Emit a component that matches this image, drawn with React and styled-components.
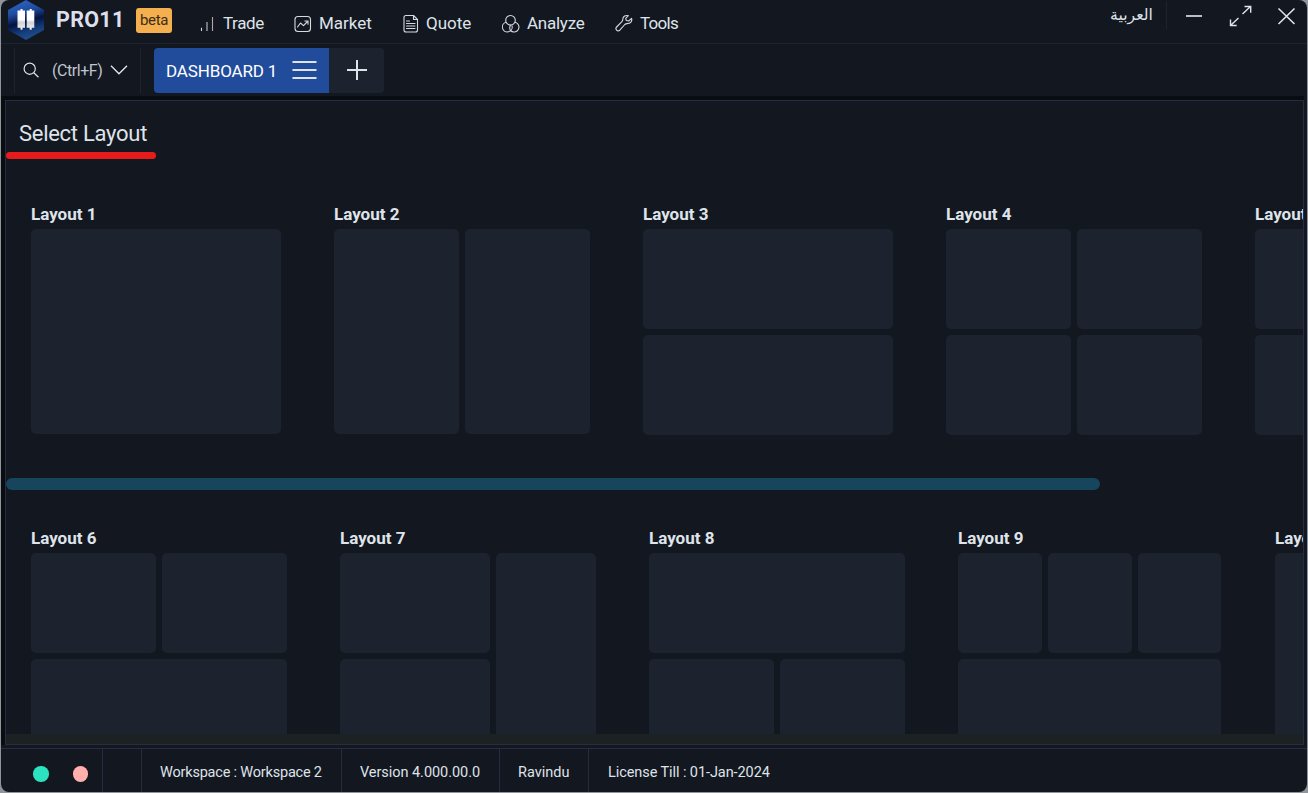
import React from "react";
import styled, { createGlobalStyle } from "styled-components";

const Global = createGlobalStyle`
  * { box-sizing: border-box; }
  html, body { margin: 0; padding: 0; }
  body {
    width: 1308px; height: 793px; overflow: hidden; background: #8f959b;
    font-family: Roboto, "Noto Sans", "DejaVu Sans", sans-serif; color: #dfe3ea;
  }
`;

const Window = styled.div`
  width: 1306px; height: 792px; margin-left: 1px; border-radius: 8px; overflow: hidden;
  background: #13171f; display: flex; flex-direction: column;
`;
const TopBar = styled.header`
  height: 44px; flex: none; display: flex; border-bottom: 1px solid #1d2230;
`;
const Logo = styled.svg`
  width: 36px; height: 40px; margin-left: 7px; flex: none;
`;
const Text = styled.span`
  display: block; white-space: nowrap; flex: none;
  font-size: ${(p) => p.$size || 17}px;
  font-weight: ${(p) => p.$weight || 400};
  letter-spacing: ${(p) => p.$track || 0}px;
  line-height: ${(p) => p.$line || 24}px;
`;
const Brand = styled(Text)`
  width: 92px; padding-left: 12px; padding-top: 8px; color: #dddfec;
`;
const Beta = styled.div`
  width: 36px; height: 25px; margin-top: 8px; border-radius: 3px; background: #f4b04f;
  color: #3b2c18; display: flex; justify-content: center; flex: none;
`;
const Menu = styled.nav`
  display: flex; margin-left: 28px; height: 43px;
`;
const MenuItem = styled.div`
  display: flex; width: ${(p) => p.$width}px; padding-top: 11px;
`;
const MenuIcon = styled.svg`
  width: ${(p) => p.$width}px; height: 24px; flex: none; fill: none;
  stroke: #d6dae2; stroke-width: 1.1; stroke-linecap: round; stroke-linejoin: round;
`;
const Controls = styled.div`
  display: flex; margin-left: auto; height: 43px;
`;
const Language = styled.div`
  width: 57px; height: 28px; margin-top: 1px; border-right: 1px solid #1e2330;
  direction: ltr; font: 15.7px/28px "DejaVu Sans", sans-serif; white-space: nowrap;
`;
const ControlIcons = styled.svg`
  width: 140px; height: 32px; fill: none; stroke: #dfe3ea; stroke-width: 1.4;
`;
const TabBar = styled.div`
  height: 52px; flex: none; display: flex; padding: 4px 0 3px 13px;
`;
const Search = styled.div`
  width: 127px; height: 45px; border: solid #1e2330; border-width: 0 1px;
  display: flex; align-items: center; padding-left: 8px; color: #bfc5cf;
`;
const LineIcon = styled.svg`
  width: ${(p) => p.$width}px; height: ${(p) => p.$height}px; flex: none; fill: none;
  margin-bottom: ${(p) => p.$lift || 0}px;
  stroke: #dfe3ea; stroke-width: ${(p) => p.$stroke || 1.4};
`;
const SearchText = styled(Text)`
  width: 58px; margin-left: 13px;
`;
const Tab = styled.div`
  width: 175px; height: 45px; margin-left: 13px; border-radius: 4px 0 0 4px;
  background: #214c9c; color: #fff; display: flex; align-items: center; padding-left: 12px;
`;
const TabText = styled(Text)`
  width: 126px;
`;
const AddTab = styled.div`
  width: 55px; height: 45px; border-radius: 0 4px 4px 0; background: #1d222f;
  display: flex; align-items: center; justify-content: center;
`;
const Workspace = styled.main`
  height: 649px; flex: none; padding: 4px 0 0 4px; width: 1303px; background: #090c11;
`;
const Panel = styled.section`
  width: 1299px; height: 645px; border: 1px solid #262c42; background: #13171f; overflow: hidden;
  display: flex; flex-direction: column;
`;
const Title = styled(Text)`
  height: 51px; padding: 18px 0 0 13px; flex: none;
`;
const Underline = styled.div`
  width: 150px; height: 7px; border-radius: 4px; background: #e61c1c; flex: none;
`;
const Row = styled.div`
  display: flex; gap: 53px; padding-left: 25px; flex: none;
  margin-top: ${(p) => p.$top}px; height: ${(p) => p.$height}px; overflow: hidden;
`;
const Layout = styled.div`
  width: ${(p) => p.$width}px; flex: none;
`;
const LayoutName = styled(Text)`
  height: 27px;
`;
const Tiles = styled.div`
  display: grid; gap: 6px; grid-template-columns: ${(p) => p.$cols};
  grid-template-rows: ${(p) => p.$rows || "100px 100px"};
`;
const Tile = styled.div`
  background: #1d222f; border-radius: 5px;
  grid-column: span ${(p) => p.$c || 1}; grid-row: span ${(p) => p.$r || 1};
`;
const ScrollThumb = styled.div`
  width: 1094px; height: 12px; margin-top: 43px; border-radius: 6px; background: #17455d; flex: none;
`;
const ScrollTrack = styled.div`
  height: 10px; background: #1c2123; flex: none;
`;
const StatusBar = styled.footer`
  display: flex; height: 44px; margin-top: 3px; border-top: 1px solid #292d43; flex: none;
`;
const Cell = styled.div`
  width: ${(p) => p.$width}px; padding: ${(p) => p.$pad || "12px 0 0 18px"};
  border-right: ${(p) => (p.$last ? 0 : 1)}px solid #252a3d; display: flex; gap: 24px;
`;
const Dot = styled.i`
  width: 15.5px; height: 15.5px; border-radius: 50%; background: ${(p) => p.$color};
`;

const menu = [
  { name: "Trade", width: 94, icon: 23, track: -0.4, art: (
    <g strokeLinecap="butt"><path d="M1.5 20v-3.2" stroke="#d6dae2" /><path d="M7 20v-9" stroke="#b9c6d2" /><path d="M12.5 20V6" stroke="#b7a5af" /></g>) },
  { name: "Market", width: 108, icon: 25, track: 0, art: (
    <><rect x="1" y="5.5" width="15.5" height="15" rx="3" /><path d="M3.5 16l3-4 3 2.7L14 10m-3.2 0H14v3.2" /></>) },
  { name: "Quote", width: 100, icon: 24, track: 0, art: (
    <><path d="M4 4.5h7.5l4 4V19q0 2-2 2H4q-2 0-2-2V6.5q0-2 2-2zM11.5 4.5v4h4M4.5 10h3M4.5 12.5h8.5M4.5 15h8.5M4.5 17.5h8.5" /></>) },
  { name: "Analyze", width: 113, icon: 25, track: -0.25, art: (
    <><circle cx="8.5" cy="9.3" r="4.8" /><path d="M4 11.3A4.9 4.9 0 1 0 10.1 15.1M13 11.3A4.9 4.9 0 1 1 8.5 19.5M8.5 19.5q-1.6-2.7 0-5.3" /></>) },
  { name: "Tools", width: 70, icon: 25, track: -0.7, art: (
    <path d="M16.6 7.4l-3 2.6-2.3-.5-.6-2.2 2.7-2.6c-2.8-.9-5.6.7-5.6 3.6 0 1-.2 1.6-.9 2.3L1.6 16c-1.8 1.8.7 5.2 3.2 3.2l5-5.7c.7-.7 1.4-.9 2.3-.9 3.4 0 5.3-2.4 4.5-5.2z" />) },
];

const rowOne = [
  { n: 1, w: 250, cols: "250px", rows: "205px", tiles: [[1, 1]] },
  { n: 2, w: 256, cols: "125px 125px", rows: "205px", tiles: [[1, 1], [1, 1]] },
  { n: 3, w: 250, cols: "250px", tiles: [[1, 1], [1, 1]] },
  { n: 4, w: 256, cols: "125px 125px", tiles: [[1, 1], [1, 1], [1, 1], [1, 1]] },
  { n: 5, w: 256, cols: "125px 125px", tiles: [[1, 1], [1, 1], [1, 1], [1, 1]] },
];
const rowTwo = [
  { n: 6, w: 256, cols: "125px 125px", tiles: [[1, 1], [1, 1], [2, 1]] },
  { n: 7, w: 256, cols: "150px 100px", tiles: [[1, 1], [1, 2], [1, 1]] },
  { n: 8, w: 256, cols: "125px 125px", tiles: [[2, 1], [1, 1], [1, 1]] },
  { n: 9, w: 264, cols: "84px 84px 83px", tiles: [[1, 1], [1, 1], [1, 1], [3, 1]] },
  { n: 10, w: 256, cols: "125px 125px", tiles: [[1, 2], [1, 1], [1, 1]] },
];

const LayoutOption = ({ item }) => (
  <Layout $width={item.w}>
    <LayoutName $weight={700} $size={17} $line={24}>Layout {item.n}</LayoutName>
    <Tiles $cols={item.cols} $rows={item.rows}>
      {item.tiles.map(([c, r], i) => <Tile key={i} $c={c} $r={r} />)}
    </Tiles>
  </Layout>
);

export default function App() {
  return (
    <>
      <Global />
      <Window>
        <TopBar>
          <Logo viewBox="0 0 36 40">
            <defs>
              <linearGradient id="hex" x1="0.3" y1="0" x2="0.55" y2="1">
                <stop offset="0" stopColor="#2d62c4" /><stop offset="0.3" stopColor="#204c9f" />
                <stop offset="0.55" stopColor="#05133f" /><stop offset="0.78" stopColor="#153c79" />
                <stop offset="1" stopColor="#205091" />
              </linearGradient>
              <linearGradient id="bar" x1="0" y1="0" x2="0" y2="1">
                <stop offset="0.5" stopColor="#fff" /><stop offset="0.65" stopColor="#d2d2d5" /><stop offset="1" stopColor="#f4f4f4" />
              </linearGradient>
            </defs>
            <path d="M18 0l18 10v20L18 40 0 30V10z" fill="url(#hex)" />
            <path d="M9.5 10.5H12.5V9h2v1.5H17v17.3h-2.5v2h-2v-2h-3zM18.7 10.5h3V9h2v1.5h2.6v17.3h-2.6v2h-2v-2h-3z" fill="url(#bar)" />
          </Logo>
          <Brand $size={21.5} $weight={700} $track={0.3}>PRO11</Brand>
          <Beta><Text $size={15} $track={-0.3}>beta</Text></Beta>
          <Menu>
            {menu.map((m) => (
              <MenuItem key={m.name} $width={m.width}>
                <MenuIcon $width={m.icon} viewBox={`0 0 ${m.icon} 24`}>{m.art}</MenuIcon>
                <Text $track={m.track}>{m.name}</Text>
              </MenuItem>
            ))}
          </Menu>
          <Controls>
            <Language>العربية</Language>
            <ControlIcons viewBox="0 0 140 32">
              <path d="M19 16h16" stroke="#b9bdcc" strokeWidth="2" />
              <path d="M75.5 14l8-7.5M77.5 6.5h6.2v6.2M71.5 18l-8 7.5M63.5 19.5v6h6.2" />
              <path d="M111.5 8.5l16 15.5M127.5 8.5l-16 15.5" strokeWidth="1.6" />
            </ControlIcons>
          </Controls>
        </TopBar>
        <TabBar>
          <Search>
            <LineIcon $width={16} $height={16} $lift={1} $stroke={1.2} viewBox="0 0 16 16"><circle cx="6.7" cy="6.7" r="5.6" /><path d="M10.8 10.8l4.7 4.4" /></LineIcon>
            <SearchText $size={16} $track={-0.45}>(Ctrl+F)</SearchText>
            <LineIcon $width={18} $height={10} $lift={1} viewBox="0 0 18 10"><path d="M1 .8l8 7.9L17 .8" /></LineIcon>
          </Search>
          <Tab>
            <TabText $track={-0.15}>DASHBOARD 1</TabText>
            <LineIcon $width={25} $height={18} $lift={1} $stroke={2} viewBox="0 0 25 18"><path d="M.5 1h24M.5 9h24M.5 17h24" /></LineIcon>
          </Tab>
          <AddTab><LineIcon $width={20} $height={20} $lift={1} $stroke={2} viewBox="0 0 20 20"><path d="M10 0v20M0 10h20" /></LineIcon></AddTab>
        </TabBar>
        <Workspace>
          <Panel>
            <Title $size={22} $line={29} $track={-0.28}>Select Layout</Title>
            <Underline />
            <Row $top={43} $height={233}>{rowOne.map((l) => <LayoutOption key={l.n} item={l} />)}</Row>
            <ScrollThumb />
            <Row $top={36} $height={208}>{rowTwo.map((l) => <LayoutOption key={l.n} item={l} />)}</Row>
            <ScrollTrack />
          </Panel>
        </Workspace>
        <StatusBar>
          <Cell $width={102} $pad="17px 0 0 32px"><Dot $color="#2de2c1" /><Dot $color="#ffb0ad" /></Cell>
          <Cell $width={39} />
          <Cell $width={200}><Text $size={14.5} $track={-0.2}>Workspace : Workspace 2</Text></Cell>
          <Cell $width={158}><Text $size={14.5} $track={-0.05}>Version 4.000.00.0</Text></Cell>
          <Cell $width={89}><Text $size={14.5}>Ravindu</Text></Cell>
          <Cell $width={300} $last $pad="12px 0 0 19px"><Text $size={14.5} $track={-0.08}>License Till : 01-Jan-2024</Text></Cell>
        </StatusBar>
      </Window>
    </>
  );
}
